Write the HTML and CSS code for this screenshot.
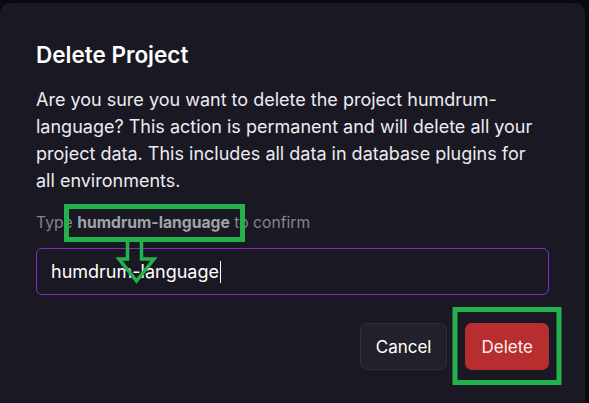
FILE: index.html
```html
<!DOCTYPE html>
<html lang="en">
<head>
<meta charset="utf-8">
<title>Delete Project</title>
<link rel="stylesheet" href="styles.css">
</head>
<body>
<div class="dialog">
  <h2 class="title">Delete Project</h2>
  <p class="body">Are you sure you want to delete the project humdrum-language? This action is permanent and will delete all your project data. This includes all data in database plugins for all environments.</p>
  <p class="label">Type <strong>humdrum-language</strong> to confirm</p>
  <div class="field"><span class="value">humdrum-language</span><span class="caret"></span></div>
  <div class="actions">
    <button class="btn btn-cancel">Cancel</button>
    <button class="btn btn-delete">Delete</button>
  </div>
  <svg class="annot" width="589" height="403" viewBox="0 0 589 403" xmlns="http://www.w3.org/2000/svg">
    <g fill="none" stroke="#22b14c">
      <rect x="66.5" y="206.5" width="176" height="33" stroke-width="5"/>
      <path d="M127.5 240 V259 H119 L136.5 281 L154 259 H141.5 V240" stroke-width="3.5" stroke-linejoin="miter"/>
      <rect x="455" y="309.5" width="104" height="73" stroke-width="5"/>
    </g>
  </svg>
</div>
</body>
</html>
```
FILE: styles.css
```css
html, body {
  margin: 0;
  padding: 0;
  background: #0a0a0d;
}
body {
  font-family: Inter, "Noto Sans", "Liberation Sans", sans-serif;
  color: #f2f2f5;
  width: 589px;
  height: 403px;
  overflow: hidden;
}
.dialog {
  position: relative;
  box-sizing: border-box;
  margin-top: 3px;
  width: 585px;
  height: 410px;
  background: #1a1923;
  border-radius: 10px;
  padding: 38px 36px 0 36px;
}
.title {
  margin: 0;
  font-size: 22.5px;
  line-height: 28px;
  font-weight: 600;
  color: #ffffff;
}
.body {
  margin: 17px 0 0 0;
  font-size: 18px;
  line-height: 27px;
  color: #ececf0;
}
.label {
  margin: 18px 0 0 0;
  font-size: 15.7px;
  line-height: 22px;
  color: #85848f;
}
.label strong {
  font-weight: 700;
  color: #a3a2ab;
}
.field {
  box-sizing: border-box;
  margin-top: 14px;
  height: 47px;
  border: 1px solid #7b2fbf;
  border-radius: 6px;
  padding: 0 14px;
  display: flex;
  align-items: center;
  font-size: 18px;
  color: #ffffff;
}
.caret {
  display: inline-block;
  width: 1px;
  height: 22px;
  background: #ffffff;
  margin-left: 1px;
}
.actions {
  margin-top: 28px;
  display: flex;
  justify-content: flex-end;
  gap: 18px;
}
.btn {
  box-sizing: border-box;
  height: 47px;
  padding: 0 15px;
  border-radius: 7px;
  font-family: inherit;
  font-size: 17px;
  color: #ffffff;
  border: 1px solid transparent;
}
.btn-cancel {
  background: #22212b;
  border-color: #2f2e39;
}
.btn-delete {
  background: #b82e2f;
  color: #fbeeee;
}
.annot {
  position: absolute;
  left: 0;
  top: -3px;
  pointer-events: none;
}
```
